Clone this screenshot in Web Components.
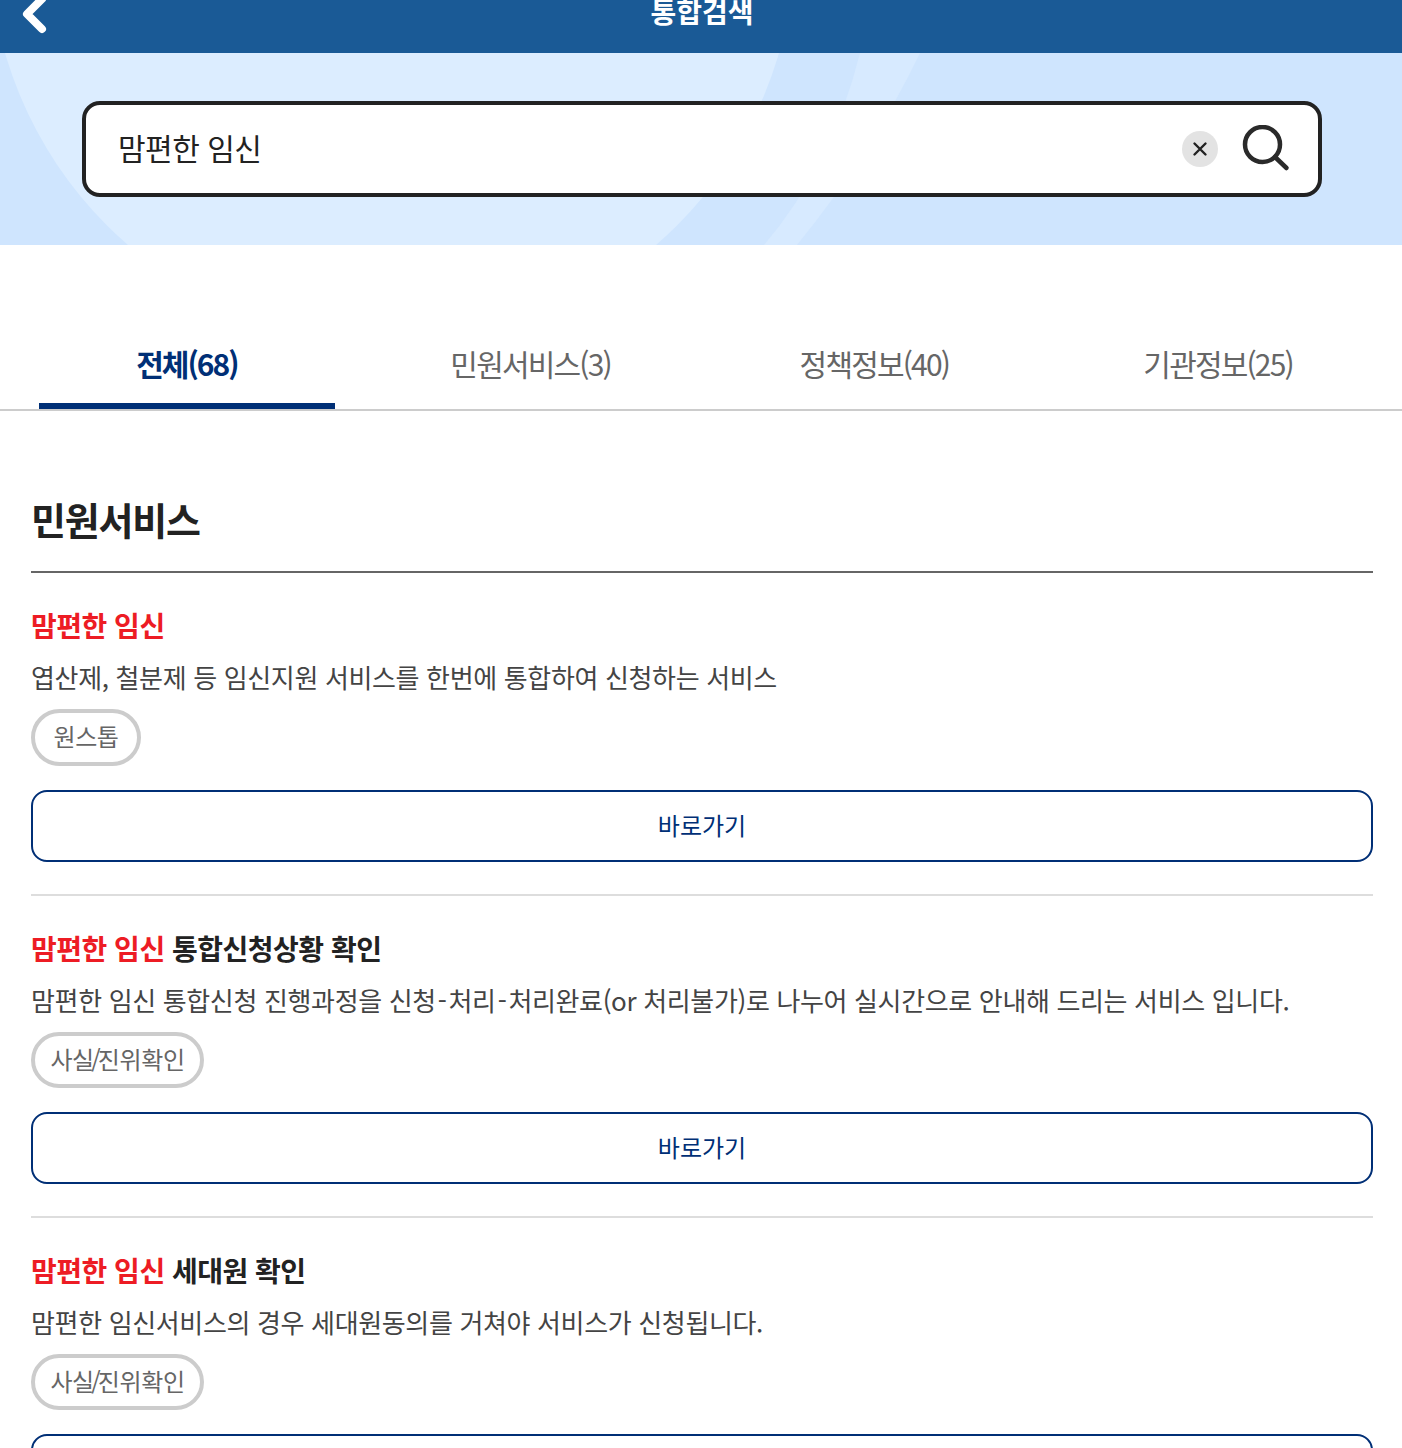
<!DOCTYPE html>
<html lang="ko"><head><meta charset="utf-8"><title>통합검색</title>
<style>
html,body{margin:0;padding:0;background:#fff;height:1448px;overflow:hidden}
body{font-family:"Noto Sans CJK KR","Noto Sans",sans-serif;color:#222}
</style></head><body>
<app-header>통합검색</app-header>
<search-hero value="맘편한 임신"></search-hero>
<tab-bar></tab-bar>
<section-block heading="민원서비스">
<result-item highlight="맘편한 임신" desc="엽산제, 철분제 등 임신지원 서비스를 한번에 통합하여 신청하는 서비스" tag="원스톱" tagw="110"></result-item>
<result-item highlight="맘편한 임신" rest=" 통합신청상황 확인" desc="맘편한 임신 통합신청 진행과정을 신청-처리-처리완료(or 처리불가)로 나누어 실시간으로 안내해 드리는 서비스 입니다." tag="사실/진위확인" tagw="173"></result-item>
<result-item highlight="맘편한 임신" rest=" 세대원 확인" desc="맘편한 임신서비스의 경우 세대원동의를 거쳐야 서비스가 신청됩니다." tag="사실/진위확인" tagw="173"></result-item>
</section-block>
<script>
class AppHeader extends HTMLElement{constructor(){super();this.attachShadow({mode:'open'}).innerHTML=`<style>
:host{display:block;height:53px;background:#1a5a96;overflow:hidden;position:relative}
.t{height:22px;line-height:22px;text-align:center;color:#fff;font-size:28px;font-weight:700;letter-spacing:0;padding-left:2px}
svg{position:absolute;left:20px;top:-8px}
</style><div class="t"><slot></slot></div>
<svg width="30" height="44" viewBox="0 0 30 44"><path d="M22 7L7 22L22 37" fill="none" stroke="#fff" stroke-width="8" stroke-linecap="round" stroke-linejoin="round"/></svg>`}}
customElements.define('app-header',AppHeader);
class SearchHero extends HTMLElement{constructor(){super();this.attachShadow({mode:'open'}).innerHTML=`<style>
:host{display:block;height:192px;background:#cfe5fe;position:relative;overflow:hidden}
.bg{position:absolute;left:0;top:0}
.wrap{position:relative;display:flex;justify-content:center;padding:48px 0 0 2px}
.box{box-sizing:border-box;width:1240px;height:96px;border:4px solid #222;border-radius:18px;background:#fff;display:flex;align-items:center;padding:0 28px 0 32px}
.v{flex:1;font-size:30px;line-height:40px;letter-spacing:-.5px;color:#222;margin-top:-4px}
.x{width:36px;height:36px;border-radius:50%;background:#e3e3e3;display:flex;align-items:center;justify-content:center;margin-right:24px}
</style>
<svg class="bg" width="1402" height="192" viewBox="0 0 1402 192"><circle cx="392" cy="-112.5" r="403" fill="#dcedff"/><path d="M860 0Q832 112 764 192H797Q872 100 920 0Z" fill="#d7eaff"/></svg>
<div class="wrap"><div class="box"><span class="v"></span><span class="x"><svg width="16" height="16" viewBox="0 0 16 16"><path d="M2.5 2.5L13.5 13.5M13.5 2.5L2.5 13.5" stroke="#222" stroke-width="2.4" stroke-linecap="round"/></svg></span>
<svg width="48" height="48" viewBox="0 0 48 48"><circle cx="20.5" cy="19.5" r="17.5" fill="none" stroke="#2a2a2a" stroke-width="4.5"/><path d="M33 32L44.5 43" stroke="#2a2a2a" stroke-width="4.5" stroke-linecap="round"/></svg></div></div>`;
this.shadowRoot.querySelector('.v').textContent=this.getAttribute('value')}}
customElements.define('search-hero',SearchHero);
class TabBar extends HTMLElement{constructor(){super();const tabs=['전체(68)','민원서비스(3)','정책정보(40)','기관정보(25)'];this.attachShadow({mode:'open'}).innerHTML=`<style>
:host{display:block;box-sizing:border-box;margin-top:79px;height:87px;border-bottom:2px solid #ccc;padding:0 12px 0 15px}
.g{display:grid;grid-template-columns:repeat(4,1fr);height:85px}
.t{margin:0 24px;text-align:center;font-size:30px;line-height:78px;letter-spacing:-1.8px;color:#666;height:85px;box-sizing:border-box}
.a{color:#002f76;font-weight:700;border-bottom:6px solid #002f76;letter-spacing:-2px}
</style><div class="g">${tabs.map((t,i)=>`<div class="t ${i?'':'a'}">${t}</div>`).join('')}</div>`}}
customElements.define('tab-bar',TabBar);
class SectionBlock extends HTMLElement{constructor(){super();this.attachShadow({mode:'open'}).innerHTML=`<style>
:host{display:block;padding:0 29px 0 31px}
h2{margin:0;padding-top:80px;height:80px;line-height:56px;font-size:38px;font-weight:700;letter-spacing:-1.2px;color:#222;border-bottom:2px solid #666}
.s{display:block;height:1px}
</style><h2></h2><span class="s"></span><slot></slot>`;this.shadowRoot.querySelector('h2').textContent=this.getAttribute('heading')}}
customElements.define('section-block',SectionBlock);
class ResultItem extends HTMLElement{constructor(){super();const a=n=>this.getAttribute(n)||'';
const desc=a('desc').replace(/-/g,'<i>-</i>');
const tag=a('tag').replace('/','<i>/</i>');
this.attachShadow({mode:'open'}).innerHTML=`<style>
:host{display:block;box-sizing:border-box;height:322px;padding-top:26px;border-bottom:2px solid #ddd}
.h{height:48px;line-height:53px;font-size:28px;font-weight:700;letter-spacing:-.5px;color:#222;white-space:pre}
:host(:first-of-type) .h{line-height:51px}
.h b{color:#ed1c24;font-weight:700}
.d{height:56px;line-height:58px;font-size:26px;letter-spacing:-.35px;color:#444;white-space:nowrap;margin-top:1px}
:host(:first-of-type) .d{line-height:56px}
.d i{font-style:normal;margin:0 2px}
.p{display:inline-flex;align-items:center;justify-content:center;box-sizing:border-box;height:56px;width:${a('tagw')}px;padding-bottom:4px;border:4px solid #ccc;border-radius:29px;font-size:24px;letter-spacing:-.4px;color:#666;margin-top:5px}
.p i{font-style:normal;margin:0 -2.5px}
:host(:first-of-type) .p{height:57px;margin-top:4px}
.bw{display:block;margin-top:23px}
.b{box-sizing:border-box;height:72px;line-height:65px;border:2px solid #002f76;border-radius:16px;text-align:center;font-size:24px;color:#002f76}
</style><div class="h"><b>${a('highlight')}</b>${a('rest')}</div><div class="d">${desc}</div><div style="height:62px"><span class="p">${tag}</span></div><div class="bw"><div class="b">바로가기</div></div>`}}
customElements.define('result-item',ResultItem);
</script>
</body></html>
